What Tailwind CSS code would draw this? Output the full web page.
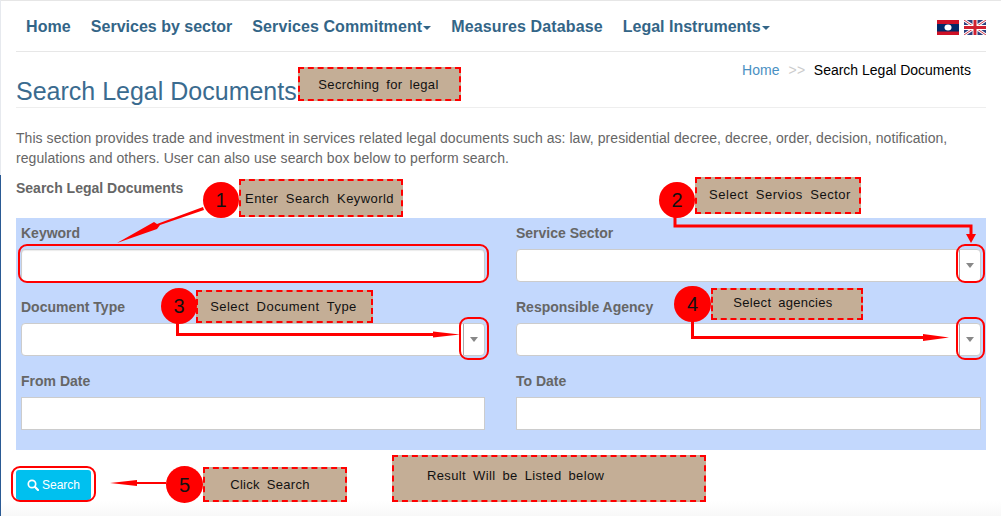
<!DOCTYPE html>
<html lang="en">
<head>
<meta charset="utf-8">
<title>Search Legal Documents</title>
<script src="https://cdn.jsdelivr.net/npm/@tailwindcss/browser@4"></script>
</head>
<body class="bg-white">
<div class="relative w-[1001px] h-[516px] overflow-hidden bg-gradient-to-b from-white from-[97%] to-[#f8f8f8] font-['Liberation_Sans',Arial,sans-serif] text-[14px] text-[#666]">
  <div class="h-px bg-[#e6e6e6]"></div>
  <div class="mx-4 w-[970px]">
    <nav class="h-[51px] border-b border-[#e7e7e7] flex items-center justify-between pl-[10px] pt-[2px] text-[16px] font-bold text-[#336587]">
      <div class="flex items-center gap-5">
        <span class="tracking-[0.1px]">Home</span>
        <span>Services by sector</span>
        <span class="flex items-center tracking-[0.1px]">Services Commitment<i class="ml-[1px] mt-[2px] border-x-[4px] border-t-[4px] border-x-transparent border-t-[#336587]"></i></span>
        <span class="tracking-[0.12px]">Measures Database</span>
        <span class="flex items-center">Legal Instruments<i class="ml-[1px] mt-[2px] border-x-[4px] border-t-[4px] border-x-transparent border-t-[#336587]"></i></span>
      </div>
      <div class="flex gap-[5px] mt-[1px]">
        <svg width="22" height="15" viewBox="0 0 22 15"><rect width="22" height="15" fill="#ce1126"/><rect y="4" width="22" height="7.500" fill="#002868"/><ellipse cx="11" cy="7.600" rx="3.500" ry="3" fill="#fff"/></svg>
        <svg width="22" height="15" viewBox="0 0 22 15"><rect width="22" height="15" fill="#2b3f7e"/><path d="M0 0L22 15M22 0L0 15" stroke="#fff" stroke-width="3"/><path d="M0 0L22 15M22 0L0 15" stroke="#cf3a4c" stroke-width="1"/><path d="M11 0V15M0 7.500H22" stroke="#fff" stroke-width="5"/><path d="M11 0V15M0 7.500H22" stroke="#cf2030" stroke-width="3"/></svg>
      </div>
    </nav>
    <header class="h-[56px] border-b border-[#eee] flex justify-between">
      <h1 class="mt-[21px] text-[25px] leading-[36px] font-normal text-[#3a6b8f]">Search Legal Documents</h1>
      <div class="mt-[9px] mr-[15px] flex gap-[8px] leading-[18px] text-black">
        <span class="text-[#4a90c2]">Home</span>
        <span class="text-[#ccc] tracking-[0.5px] pl-[1px]">&gt;&gt;</span>
        <span>Search Legal Documents</span>
      </div>
    </header>
    <p class="mt-[20px] leading-[20px] tracking-[0.055px]">This section provides trade and investment in services related legal documents such as: law, presidential decree, decree, order, decision, notification, regulations and others. User can also use search box below to perform search.</p>
    <h2 class="mt-[10px] leading-[20px] font-bold">Search Legal Documents</h2>
    <form class="mt-[20px] h-[232px] bg-[#c3d8fd] px-[5px] pt-[6px] grid grid-cols-[464px_465px] gap-x-[31px] content-start font-bold">
      <div class="h-[74px]">
        <label class="block leading-[18px]">Keyword</label>
        <div class="mt-[7px] h-[33px] bg-white border border-[#ccc] rounded-[4px] shadow-[inset_0_1px_1px_rgba(0,0,0,0.08)]"></div>
      </div>
      <div class="h-[74px]">
        <label class="block leading-[18px]">Service Sector</label>
        <div class="mt-[7px] h-[33px] bg-white border border-[#ccc] rounded-[4px] flex justify-end">
          <div class="w-[21px] border-l border-[#aaa] flex items-center justify-center"><i class="border-x-[4px] border-t-[5px] border-x-transparent border-t-[#888]"></i></div>
        </div>
      </div>
      <div class="h-[74px]">
        <label class="block leading-[18px]">Document Type</label>
        <div class="mt-[7px] h-[33px] bg-white border border-[#ccc] rounded-[4px] flex justify-end">
          <div class="w-[21px] border-l border-[#aaa] flex items-center justify-center"><i class="border-x-[4px] border-t-[5px] border-x-transparent border-t-[#888]"></i></div>
        </div>
      </div>
      <div class="h-[74px]">
        <label class="block leading-[18px]">Responsible Agency</label>
        <div class="mt-[7px] h-[33px] bg-white border border-[#ccc] rounded-[4px] flex justify-end">
          <div class="w-[21px] border-l border-[#aaa] flex items-center justify-center"><i class="border-x-[4px] border-t-[5px] border-x-transparent border-t-[#888]"></i></div>
        </div>
      </div>
      <div>
        <label class="block leading-[18px]">From Date</label>
        <div class="mt-[7px] h-[33px] bg-white border border-[#ccc]"></div>
      </div>
      <div>
        <label class="block leading-[18px]">To Date</label>
        <div class="mt-[7px] h-[33px] bg-white border border-[#ccc]"></div>
      </div>
    </form>
    <button class="mt-[20px] w-[75px] h-[30px] rounded-[3px] bg-[#00c0ef] text-white text-[12px] flex items-center justify-center gap-[3px]">
      <svg width="12" height="12" viewBox="0 0 12 12" fill="none" stroke="#fff"><circle cx="5" cy="5" r="3.700" stroke-width="1.700"/><path d="M7.800 7.800L11 11" stroke-width="2.200" stroke-linecap="round"/></svg>
      <span>Search</span>
    </button>
  </div>

  <!-- annotation layer -->
  <svg class="absolute left-0 top-0" width="1001" height="516" viewBox="0 0 1001 516" fill="none">
    <g stroke="#f00" stroke-width="2">
      <rect x="19" y="245" width="469" height="37" rx="8"/>
      <rect x="460" y="318" width="28" height="41" rx="8"/>
      <rect x="957" y="245" width="27" height="37" rx="8"/>
      <rect x="957" y="318" width="27" height="41" rx="8"/>
      <rect x="12" y="467" width="83" height="34" rx="8"/>
    </g>
    <g stroke="#f00" stroke-width="3" stroke-linejoin="miter">
      <path d="M675 216V226H971V234"/>
      <path d="M177.500 322V334.500H434"/>
      <path d="M692.500 320V337.500H924"/>
      <path d="M166 483H137" stroke-width="2"/>
    </g>
    <g fill="#f00">
      <path d="M203 207L204 210L160 225L157 229L117 243L154 222L157 224Z"/>
      <path d="M966 234H976L971 243Z"/>
      <path d="M433 331.500L460 334.500L433 337.500Z"/>
      <path d="M923 334L949 337.500L923 341Z"/>
      <path d="M137 480L110 483L137 486Z"/>
    </g>
  </svg>

  <div class="absolute left-[298px] top-[67px] w-[163px] h-[34px] border-2 border-dashed border-[#f00] bg-[#c4ae96] flex items-center justify-center text-[13px] text-[#111] tracking-[0.35px] [word-spacing:3px] pt-[2px] pr-[2px]">Secrching for legal</div>
  <div class="absolute left-[239px] top-[179px] w-[164px] h-[38px] border-2 border-dashed border-[#f00] bg-[#c4ae96] flex items-center justify-center text-[13px] text-[#111] tracking-[0.42px] [word-spacing:3.500px] pt-[2px] pr-[3px]">Enter Search Keyworld</div>
  <div class="absolute left-[196px] top-[290px] w-[177px] h-[33px] border-2 border-dashed border-[#f00] bg-[#c4ae96] flex items-center justify-center text-[13px] text-[#111] tracking-[0.45px] [word-spacing:3.500px] pt-[1px] pr-[2px]">Select Document Type</div>
  <div class="absolute left-[695px] top-[177px] w-[166px] h-[37px] border-2 border-dashed border-[#f00] bg-[#c4ae96] flex items-center justify-center text-[13px] text-[#111] tracking-[0.5px] [word-spacing:3.500px] pb-[2px] pl-[4px]">Select Servios Sector</div>
  <div class="absolute left-[711px] top-[288px] w-[152px] h-[32px] border-2 border-dashed border-[#f00] bg-[#c4ae96] flex items-center justify-center text-[13px] text-[#111] tracking-[0.3px] [word-spacing:3px] pb-[2px] pr-[8px]">Select agencies</div>
  <div class="absolute left-[203px] top-[467px] w-[144px] h-[35px] border-2 border-dashed border-[#f00] bg-[#c4ae96] flex items-center justify-center text-[13px] text-[#111] tracking-[0.3px] [word-spacing:3px] pr-[10px]">Click Search</div>
  <div class="absolute left-[392px] top-[455px] w-[314px] h-[47px] border-2 border-dashed border-[#f00] bg-[#c4ae96] pl-[33px] pt-[11px] leading-[16px] text-[13px] text-[#111] tracking-[0.37px] [word-spacing:3px]">Result Will be Listed below</div>

  <div class="absolute left-[203px] top-[182px] w-[36px] h-[36px] rounded-full bg-[#f00] flex items-center justify-center text-[20px] text-[#111]">1</div>
  <div class="absolute left-[659px] top-[182px] w-[36px] h-[36px] rounded-full bg-[#f00] flex items-center justify-center text-[20px] text-[#111]">2</div>
  <div class="absolute left-[161px] top-[288px] w-[36px] h-[36px] rounded-full bg-[#f00] flex items-center justify-center text-[20px] text-[#111]">3</div>
  <div class="absolute left-[674px] top-[286px] w-[37px] h-[36px] rounded-full bg-[#f00] flex items-center justify-center text-[20px] text-[#111]">4</div>
  <div class="absolute left-[166px] top-[466px] w-[37px] h-[37px] rounded-full bg-[#f00] flex items-center justify-center text-[20px] text-[#111]">5</div>

  <div class="absolute left-0 top-0 w-px h-[175px] bg-[#e6e9ee]"></div>
  <div class="absolute left-0 top-[175px] w-px h-[341px] bg-[#2a5a94]"></div>
</div>
</body>
</html>
